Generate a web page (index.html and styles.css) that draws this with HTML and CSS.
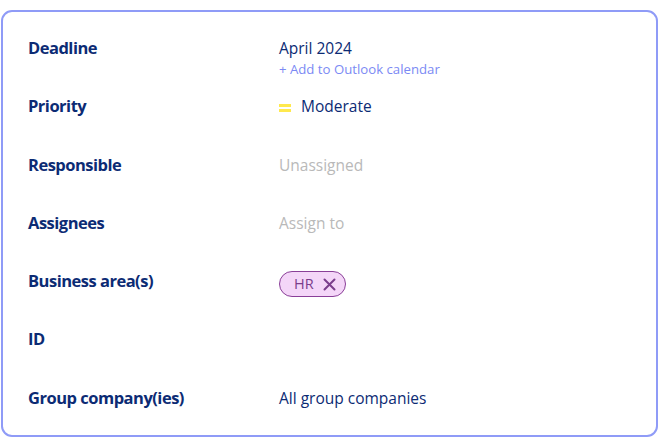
FILE: index.html
```html
<!DOCTYPE html>
<html lang="en">
<head>
    <meta charset="UTF-8">
    <meta name="viewport" content="width=device-width, initial-scale=1.0">
    <title>Task details</title>
    <link rel="stylesheet" href="styles.css">
</head>
<body>
    <div class="card">
        <div class="row">
            <div class="label">Deadline</div>
            <div class="value">
                <div>April 2024</div>
                <a class="calendar-link" href="#">+ Add to Outlook calendar</a>
            </div>
        </div>
        <div class="row">
            <div class="label">Priority</div>
            <div class="value priority">
                <span class="priority-icon"></span>
                <span>Moderate</span>
            </div>
        </div>
        <div class="row">
            <div class="label">Responsible</div>
            <div class="value placeholder">Unassigned</div>
        </div>
        <div class="row">
            <div class="label">Assignees</div>
            <div class="value placeholder">Assign to</div>
        </div>
        <div class="row">
            <div class="label">Business area(s)</div>
            <div class="value">
                <span class="chip">HR
                    <svg width="13" height="13" viewBox="0 0 13 13"><path d="M1.5 1.5 L11.5 11.5 M11.5 1.5 L1.5 11.5" stroke="#7a3d8c" stroke-width="2" stroke-linecap="round"/></svg>
                </span>
            </div>
        </div>
        <div class="row">
            <div class="label">ID</div>
            <div class="value"></div>
        </div>
        <div class="row">
            <div class="label">Group company(ies)</div>
            <div class="value">All group companies</div>
        </div>
    </div>
</body>
</html>
```

FILE: styles.css
```css
body {
    margin: 0;
    background-color: #ffffff;
    font-family: "Open Sans", "Noto Sans", sans-serif;
}

.card {
    box-sizing: border-box;
    width: 657px;
    height: 427px;
    margin: 10px 0 0 1px;
    padding: 24px 0 0 25px;
    border: 2px solid #8f9bf7;
    border-radius: 11px;
}

.row {
    display: flex;
    align-items: flex-start;
    height: 58.3px;
}

.label {
    width: 251px;
    font-size: 16.5px;
    font-weight: 700;
    letter-spacing: -0.5px;
    line-height: 24px;
    color: #0c2b74;
}

.value {
    font-size: 15.5px;
    line-height: 24px;
    color: #0c2b74;
}

.calendar-link {
    display: block;
    font-size: 13.2px;
    line-height: 18px;
    color: #7b8af4;
    text-decoration: none;
}

.priority {
    display: flex;
    align-items: center;
    gap: 10px;
}

.priority-icon {
    width: 12px;
    height: 8px;
    border-top: 3px solid #ffe94d;
    border-bottom: 3px solid #ffe94d;
    box-sizing: border-box;
    margin-top: 3px;
}

.placeholder {
    color: #b9b9b9;
}

.chip {
    display: inline-flex;
    align-items: center;
    gap: 9px;
    box-sizing: border-box;
    height: 26px;
    margin-top: 2px;
    padding: 0 9px 0 14px;
    border: 1.5px solid #8a3f98;
    border-radius: 13px;
    background-color: #f4d6f8;
    color: #7a3d8c;
    font-size: 14.5px;
}
```
